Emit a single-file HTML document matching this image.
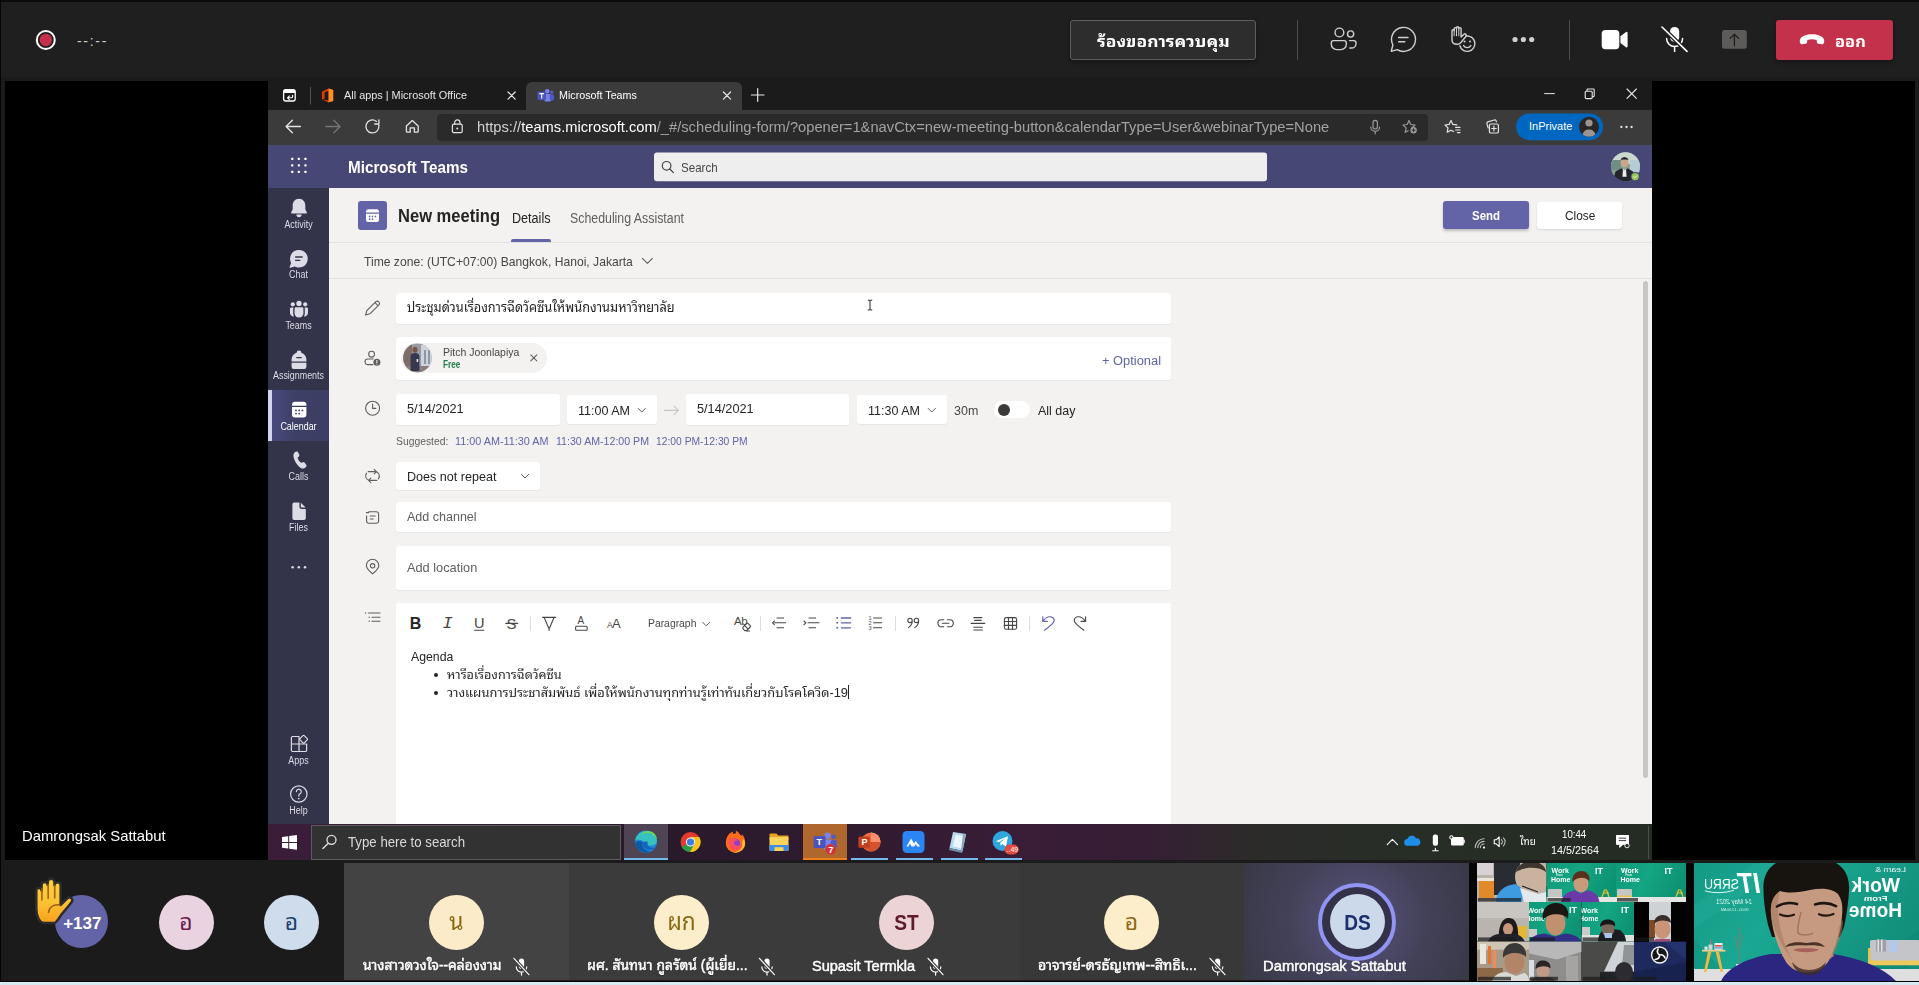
<!DOCTYPE html>
<html lang="th">
<head>
<meta charset="utf-8">
<title>Microsoft Teams meeting</title>
<style>
*{box-sizing:border-box;margin:0;padding:0}
html,body{width:1919px;height:985px;overflow:hidden;background:#1f1f1f}
body{position:relative;font-family:"Liberation Sans","Noto Sans Thai Looped","Loma","Noto Sans Thai",sans-serif;color:#fff}
.a{position:absolute}
.t{position:absolute;white-space:nowrap;line-height:1;transform-origin:0 50%}
svg{position:absolute;overflow:visible}
/* ---------- top bar ---------- */
#topline{left:0;top:0;width:1919px;height:2px;background:#0b0b0b}
#topshade{left:0;top:77px;width:1919px;height:905px;background:#1b1b1b}
#leftline{left:0;top:0;width:1px;height:982px;background:#050505;z-index:5}
#stage{left:5px;top:81px;width:1910px;height:779px;background:#000}
#strip{left:0;top:860px;width:1919px;height:121px;background:#1b1b1b}
#bottomline{left:0;top:980.700px;width:1919px;height:4.300px;background:linear-gradient(#000 0,#000 1.300px,#dbeef5 1.300px,#cfe5ee 100%)}
/* ---------- browser ---------- */
#tabbar{left:268px;top:81px;width:1384px;height:29px;background:#1c1b1c}
#tabactive{left:526px;top:82px;width:216px;height:28px;background:#3b3b3b;border-radius:6px 6px 0 0}
#toolbar{left:268px;top:110px;width:1384px;height:35px;background:#3b3b3b}
#urlbox{left:437px;top:114px;width:991px;height:27px;background:#2a2a2a;border-radius:4px}
/* ---------- teams ---------- */
#thead{left:268px;top:145px;width:1384px;height:43px;background:#464775}
#rail{left:268px;top:188px;width:61px;height:636px;background:#33344a}
#content{left:329px;top:188px;width:1323px;height:636px;background:#f3f2f1}
#taskbar{left:268px;top:824px;width:1384px;height:36px;background:#2f1d30}
.rl{font-size:10px;color:#dcdce6;left:268.200px !important;width:61px;text-align:center;transform:scaleX(.89);transform-origin:50% 50%}
.av{width:55px;height:55px;border-radius:50%}
.c{text-align:center;transform-origin:50% 50%}
.nm{font-size:14.200px;font-weight:400;color:#fff;-webkit-text-stroke:0.450px #fff;text-shadow:0 1px 1px rgba(0,0,0,.35)}
.box{position:absolute;background:#fff;border-radius:3px;box-shadow:0 1px 1px rgba(0,0,0,.05)}
</style>
</head>
<body>
<div class="a" id="topline"></div>
<div class="a" id="topshade"></div>
<div class="a" id="leftline"></div>
<div class="a" id="stage"></div>
<div class="a" id="strip"></div>
<div class="a" id="bottomline"></div>

<!-- BROWSER -->
<div class="a" id="tabbar"></div>
<div class="a" id="tabactive"></div>
<div class="a" id="toolbar"></div>
<div class="a" id="urlbox"></div>

<!-- TEAMS -->
<div class="a" id="thead"></div>
<div class="a" id="rail"></div>
<div class="a" id="content"></div>
<div class="a" id="taskbar"></div>

<!--TOPBAR-->
<!-- ======== MEETING TOP BAR ======== -->
<svg class="a" style="left:0;top:0" width="1919" height="80" viewBox="0 0 1919 80">
  <!-- record -->
  <circle cx="45.8" cy="40" r="9" fill="#1f1f1f" stroke="#fff" stroke-width="2"/>
  <circle cx="45.8" cy="40" r="6.2" fill="#c4314b"/>
  <!-- separators -->
  <rect x="1297" y="20" width="1" height="40" fill="#4b4b4b"/>
  <rect x="1569" y="20" width="1" height="40" fill="#4b4b4b"/>
  <g fill="none" stroke="#d2d0ce" stroke-width="1.4" stroke-linecap="round" stroke-linejoin="round">
    <!-- people -->
    <circle cx="1339.4" cy="32.5" r="4.4"/>
    <circle cx="1350.6" cy="34" r="3.1"/>
    <path d="M1331.3 42.8a2.2 2.2 0 0 1 2.2-2.2h10.6a2.2 2.2 0 0 1 2.2 2.2v1.4a5.4 5.4 0 0 1-5.4 5.4h-4.2a5.4 5.4 0 0 1-5.4-5.4z"/>
    <path d="M1349.6 40.6h4.2a2.2 2.2 0 0 1 2.2 2.2v0.6a4.6 4.6 0 0 1-4.6 4.6h-1.6"/>
    <!-- chat -->
    <path d="M1397.2 49.6a12 12 0 1 0-4.3-4.6l-1.7 6.3z"/>
    <path d="M1398.6 37.5h9.4M1398.6 41.7h6.2"/>
    <!-- raise hand + smile -->
    <path d="M1452 40v-9.2a1.1 1.1 0 0 1 2.2 0v-2a1.15 1.15 0 0 1 2.3 0v-0.9a1.15 1.15 0 0 1 2.3 0v0.9a1.15 1.15 0 0 1 2.3 0v8.2l2.6-2.6a1.5 1.5 0 0 1 2.2 2.1l-5.2 6.2a4 4 0 0 1-3.4 1.6c-3.3 0-5.3-1.7-5.3-4.3z" />
    <path d="M1454.2 30.8v5M1456.5 28.8v7M1458.8 28.8v7" stroke-width="1"/>
    <path d="M1466.2 36a7.7 7.7 0 1 1-6.4 9.8"/>
    <path d="M1463.6 45.6a4.2 4.2 0 0 0 7.2 0" />
  </g>
  <g fill="#d2d0ce">
    <circle cx="1464.6" cy="41.6" r="1"/><circle cx="1470" cy="41.6" r="1"/>
    <!-- more -->
    <circle cx="1515" cy="39.5" r="2.6"/><circle cx="1523.4" cy="39.5" r="2.6"/><circle cx="1531.7" cy="39.5" r="2.6"/>
  </g>
  <!-- video -->
  <rect x="1601.7" y="30" width="17.6" height="19.2" rx="3.6" fill="#fff"/>
  <path d="M1620.4 36.2l5.6-4.2a1 1 0 0 1 1.6 0.8v13.6a1 1 0 0 1-1.6 0.8l-5.6-4.2z" fill="#fff"/>
  <!-- mic off -->
  <rect x="1670" y="27" width="9.2" height="14.8" rx="4.6" fill="#fff"/>
  <path d="M1666.6 38.6a8 8 0 0 0 16 0M1674.6 46.8v4.6" fill="none" stroke="#fff" stroke-width="1.5" stroke-linecap="round"/>
  <path d="M1662 27l25 24.4" stroke="#1f1f1f" stroke-width="4.2" stroke-linecap="round"/>
  <path d="M1662 27l25 24.4" stroke="#fff" stroke-width="1.6" stroke-linecap="round"/>
  <!-- share -->
  <rect x="1722" y="30" width="24.8" height="18.8" rx="2.4" fill="#5c5b5a"/>
  <path d="M1734.4 45.8v-11.4M1730.2 38.4l4.2-4.2 4.2 4.2" fill="none" stroke="#1f1f1f" stroke-width="1.3" stroke-linecap="round" stroke-linejoin="round"/>
</svg>
<div class="t" id="tb-timer" style="left:77px;top:34px;font-size:14px;color:#cfcfcf;letter-spacing:1.700px">--:--</div>
<div class="a" id="tb-req" style="left:1070px;top:20px;width:186px;height:40px;background:#2d2d2d;border:1px solid #5f5f5f;border-radius:3px;box-shadow:0 2px 4px rgba(0,0,0,.35)"></div>
<div class="t" id="tb-reqt" style="transform:scaleX(1.161);left:1097px;top:34px;font-size:15px;font-weight:700;color:#fff;">ร้องขอการควบคุม</div>
<div class="a" id="tb-leave" style="left:1776px;top:20px;width:117px;height:40px;background:#c4314b;border-radius:3px;box-shadow:0 2px 4px rgba(0,0,0,.35)"></div>
<svg class="a" style="left:1798px;top:32px" width="28" height="16" viewBox="0 0 28 16">
  <path d="M14 2.2c-5.6 0-9.700 1.800-11.500 4.200c-1 1.300-0.800 3.200-0.300 4.700c0.300 0.900 1.100 1.400 2 1.200l3.300-0.600c0.900-0.200 1.500-0.900 1.600-1.800l0.200-1.900c1.500-0.500 3.100-0.700 4.700-0.700s3.200 0.200 4.700 0.700l0.200 1.900c0.100 0.900 0.700 1.600 1.600 1.800l3.300 0.600c0.900 0.200 1.700-0.300 2-1.200c0.500-1.500 0.700-3.400-0.300-4.700c-1.800-2.400-5.900-4.200-11.500-4.200z" fill="#fff"/>
</svg>
<div class="t" id="tb-leavet" style="transform:scaleX(1.091);left:1835px;top:34px;font-size:15px;font-weight:700;color:#fff">ออก</div>
<!--/TOPBAR-->
<!--CHROME-->
<!-- ======== BROWSER CHROME ======== -->
<svg class="a" style="left:268px;top:81px" width="1384" height="64" viewBox="268 81 1384 64">
  <!-- tab actions -->
  <rect x="283.6" y="89.6" width="11.6" height="11.4" rx="2.2" fill="none" stroke="#fff" stroke-width="1.3"/>
  <path d="M283.6 92.2a2.4 2.4 0 0 1 2.4-2.6h6.800a2.4 2.4 0 0 1 2.4 2.600v0.700h-11.600z" fill="#fff"/>
  <path d="M292.6 95.200v1.600a1 1 0 0 1-1 1h-4M289.400 96l-1.900 1.800 1.900 1.800" fill="none" stroke="#fff" stroke-width="1.1" stroke-linecap="round" stroke-linejoin="round"/>
  <rect x="310" y="87" width="1" height="17.500" fill="#555"/>
  <!-- office logo -->
  <path d="M322 91.800l6.600-3.200 4.600 1.300v11l-4.600 1.300-6.600-2.600 6.600 0.800v-9.300l-4 1v6.300l-2.600 1.200z" fill="#eb3c00"/>
  <path d="M328.600 88.600l4.600 1.300v11l-4.600 1.300z" fill="#ff8f2b"/>
  <!-- teams tab icon -->
  <circle cx="547.200" cy="91.300" r="2.300" fill="#7b83eb"/>
  <circle cx="551.800" cy="92.200" r="1.700" fill="#5059c9"/>
  <rect x="544.600" y="94" width="6.400" height="7.600" rx="1.400" fill="#7b83eb"/>
  <rect x="549.600" y="94.400" width="4.400" height="6" rx="1.400" fill="#5059c9"/>
  <rect x="537.400" y="91.400" width="8.600" height="8.600" rx="1" fill="#4b53bc"/>
  <path d="M539.400 93.600h4.600M541.700 93.600v4.800" stroke="#fff" stroke-width="1.100" fill="none"/>
  <!-- tab close X -->
  <g stroke="#e8e8e8" stroke-width="1.200" stroke-linecap="round" fill="none">
    <path d="M508 92l7.200 7.200M515.200 92l-7.200 7.200"/>
    <path d="M723.400 92l7.200 7.200M730.600 92l-7.200 7.200"/>
    <path d="M751.400 95h12.600M757.700 88.700v12.600"/>
    <!-- window controls -->
    <path d="M1544.600 93.600h9.800" stroke-width="1"/>
    <path d="M1627 89l9.400 9.400M1636.400 89l-9.400 9.400" stroke-width="1.100"/>
  </g>
  <rect x="1585.200" y="91.200" width="7" height="7.400" rx="1" fill="none" stroke="#e8e8e8" stroke-width="1.100"/>
  <path d="M1587 91v-1.200a0.800 0.800 0 0 1 0.800-0.800h5.600a0.800 0.800 0 0 1 0.800 0.800v6a0.800 0.800 0 0 1-0.800 0.800h-1.200" fill="none" stroke="#e8e8e8" stroke-width="1.100"/>
  <!-- nav icons -->
  <g stroke="#e4e4e4" stroke-width="1.300" stroke-linecap="round" stroke-linejoin="round" fill="none">
    <path d="M300.400 126.500h-14M292.400 120.200l-6.300 6.300 6.300 6.300"/>
    <path d="M325.800 126.500h14M333.800 120.200l6.300 6.300-6.300 6.300" stroke="#757575"/>
    <path d="M378.800 125.200a6.500 6.500 0 1 1-2.300-3.800M378.900 119.800v4.200h-4.200"/>
    <path d="M406.400 126l5.900-5.400 5.900 5.400v5.400a0.800 0.800 0 0 1-0.800 0.800h-3v-4.400h-4.200v4.400h-3a0.800 0.800 0 0 1-0.800-0.800z"/>
  </g>
</svg>
<svg class="a" style="left:437px;top:110px" width="1215" height="35" viewBox="437 110 1215 35">
  <g stroke="#e4e4e4" stroke-width="1.200" stroke-linecap="round" stroke-linejoin="round" fill="none">
    <!-- lock -->
    <rect x="452.400" y="124.200" width="9.800" height="8.400" rx="1.400"/>
    <path d="M454.700 124v-1.500a2.600 2.600 0 0 1 5.200 0v1.500"/>
    <!-- mic -->
    <g stroke="#9a9a9a">
    <rect x="1373" y="120.400" width="4.400" height="8.600" rx="2.200"/>
    <path d="M1370.800 127a4.400 4.400 0 0 0 8.800 0M1375.200 131.600v2.200"/>
    <!-- star plus -->
    <path d="M1409 120.600l1.800 3.900 4.200 0.500-3.100 2.900 0.500 2M1409 120.600l-1.800 3.900-4.200 0.500 3.100 2.900-0.900 4.400 3-1.600"/>
    </g>
    <!-- favorites -->
    <path d="M1451 120.600l1.800 3.800 4 0.500M1451 120.600l-1.900 3.800-4.100 0.600 3 2.900-0.800 4.300 3.800-2 2.600 1.300M1455.600 127.400h4.400M1455.600 130h4.400M1457.400 132.600h2.600"/>
    <!-- collections -->
    <rect x="1489.400" y="124" width="9" height="9" rx="1.600"/>
    <path d="M1493.900 126.200v4.600M1491.600 128.500h4.600M1496.400 121.800l-0.300-0.900a1.400 1.400 0 0 0-1.700-0.900l-6.600 1.900a1.400 1.400 0 0 0-0.900 1.700l1.300 4.400"/>
  </g>
  <circle cx="457.300" cy="128.400" r="1" fill="#e4e4e4"/>
  <circle cx="1413.600" cy="130.200" r="3.200" fill="#9a9a9a"/>
  <path d="M1411.800 130.200h3.600M1413.600 128.400v3.600" stroke="#2b2b2b" stroke-width="1"/>
  <!-- inprivate -->
  <rect x="1516" y="113.400" width="87" height="26.800" rx="13.400" fill="#0067c0"/>
  <circle cx="1589" cy="126.800" r="10" fill="#2b2624"/>
  <circle cx="1589" cy="123" r="3.600" fill="#9b9592"/>
  <path d="M1582.600 134.400a6.600 6.600 0 0 1 12.800 0a10 10 0 0 1-12.800 0z" fill="#9b9592"/>
  <g fill="#e8e8e8"><circle cx="1621.400" cy="127" r="1.150"/><circle cx="1626.500" cy="127" r="1.150"/><circle cx="1631.600" cy="127" r="1.150"/></g>
</svg>
<div class="t" id="c-tab1" style="transform:scaleX(0.99);left:344px;top:89.500px;font-size:11px;color:#e6e6e6">All apps | Microsoft Office</div>
<div class="t" id="c-tab2" style="transform:scaleX(.975);left:559px;top:89.500px;font-size:11px;color:#fff">Microsoft Teams</div>
<div class="t" id="c-url" style="transform:scaleX(1.05);left:477px;top:119.500px;font-size:14px;color:#a3a3a3"><span style="color:#d2d2d2">https://</span><span style="color:#fff">teams.microsoft.com</span>/_#/scheduling-form/?opener=1&amp;navCtx=new-meeting-button&amp;calendarType=User&amp;webinarType=None</div>
<div class="t" id="c-inp" style="left:1529px;top:121px;font-size:11px;color:#fff">InPrivate</div>
<!--/CHROME-->
<!--TEAMSHEAD-->
<!-- ======== TEAMS HEADER ======== -->
<svg class="a" style="left:268px;top:145px" width="1384" height="43" viewBox="268 145 1384 43">
  <g fill="#fff">
    <rect x="291.200" y="157.800" width="2.100" height="2.100" rx="0.500"/><rect x="297.800" y="157.800" width="2.100" height="2.100" rx="0.500"/><rect x="304.400" y="157.800" width="2.100" height="2.100" rx="0.500"/>
    <rect x="291.200" y="164.300" width="2.100" height="2.100" rx="0.500"/><rect x="297.800" y="164.300" width="2.100" height="2.100" rx="0.500"/><rect x="304.400" y="164.300" width="2.100" height="2.100" rx="0.500"/>
    <rect x="291.200" y="170.800" width="2.100" height="2.100" rx="0.500"/><rect x="297.800" y="170.800" width="2.100" height="2.100" rx="0.500"/><rect x="304.400" y="170.800" width="2.100" height="2.100" rx="0.500"/>
  </g>
  <rect x="654" y="152.600" width="613" height="28.600" rx="3" fill="#eeeeee"/>
  <circle cx="666.600" cy="165.800" r="4.300" fill="none" stroke="#484644" stroke-width="1.200"/>
  <path d="M669.800 169l3.600 3.600" stroke="#484644" stroke-width="1.300" stroke-linecap="round"/>
  <!-- avatar -->
  <circle cx="1625.500" cy="166.700" r="14.500" fill="#8aa38f"/>
  <clipPath id="avc"><circle cx="1625.500" cy="166.700" r="14.500"/></clipPath>
  <g clip-path="url(#avc)">
    <rect x="1611" y="152" width="29" height="12" fill="#c9d9cf"/>
    <rect x="1611" y="160" width="10" height="10" fill="#6f8f86"/>
    <rect x="1630" y="160" width="11" height="12" fill="#b7cbd6"/>
    <ellipse cx="1624.500" cy="162.500" rx="4" ry="4.800" fill="#c9a58c"/>
    <path d="M1620.400 160.800a4.200 4.200 0 0 1 8.200-0.600l-1.200-0.800h-5.600z" fill="#1d1d22"/>
    <path d="M1612.500 182l3-10.500 6-3.200 3 3 3-3 5.500 3.200 3 10.500z" fill="#24242c"/>
    <path d="M1623 168.800l1.500 1.600 1.500-1.600 0.600 8h-4.200z" fill="#e9e9ee"/>
  </g>
  <circle cx="1635.200" cy="176.600" r="4.600" fill="#464775"/>
  <circle cx="1635.200" cy="176.600" r="3.700" fill="#92c353"/>
  <path d="M1633.500 176.700l1.200 1.200 2.200-2.300" stroke="#fff" stroke-width="0.900" fill="none" stroke-linecap="round" stroke-linejoin="round"/>
</svg>
<div class="t" id="h-title" style="transform:scaleX(.952);left:348px;top:160px;font-size:16px;font-weight:700;color:#fff">Microsoft Teams</div>
<div class="t" id="h-search" style="transform:scaleX(.89);left:680.500px;top:160.500px;font-size:13px;color:#484644">Search</div>
<!-- ======== LEFT RAIL ======== -->
<div class="a" style="left:268px;top:390px;width:61px;height:51px;background:linear-gradient(90deg,#4a4c80 0%,#3d3f66 45%,#3d3e62 100%)"></div>
<div class="a" style="left:268px;top:390px;width:3.500px;height:51px;background:#d3d4ee"></div>
<svg class="a" style="left:268px;top:188px" width="61" height="636" viewBox="268 188 61 636">
  <g fill="#dcdce6">
    <!-- activity bell -->
    <path d="M299 198.700c-3.700 0-6.300 2.900-6.300 6.400v4.100l-1.500 3a0.900 0.900 0 0 0 0.800 1.300h14a0.900 0.900 0 0 0 0.800-1.300l-1.500-3v-4.100c0-3.500-2.600-6.400-6.300-6.400z"/>
    <path d="M296.400 214.600h5.200a2.600 2.600 0 0 1-5.200 0z"/>
    <!-- chat -->
    <path d="M298.800 249.900a8.800 8.800 0 0 0-7.700 13l-1.500 4a0.600 0.600 0 0 0 0.800 0.800l4.300-1.300a8.800 8.800 0 1 0 4.100-16.500z"/>
    <!-- teams -->
    <circle cx="299" cy="303.400" r="2.700"/><circle cx="292.800" cy="304.300" r="2.100"/><circle cx="305.200" cy="304.300" r="2.100"/>
    <path d="M294.600 308.600a1.400 1.400 0 0 1 1.400-1.400h6a1.400 1.400 0 0 1 1.400 1.400v4.600a4.400 4.400 0 0 1-8.800 0z"/>
    <path d="M290 308.600a1.200 1.200 0 0 1 1.200-1.200h2.200a2.400 2.400 0 0 0-0.200 1v5a5.600 5.600 0 0 0 0.900 3a3.700 3.700 0 0 1-4.100-3.700z"/>
    <path d="M308 308.600a1.200 1.200 0 0 0-1.200-1.200h-2.200a2.400 2.400 0 0 1 0.200 1v5a5.600 5.600 0 0 1-0.900 3a3.700 3.700 0 0 0 4.100-3.700z"/>
    <!-- assignments backpack -->
    <path d="M296.600 352.800a2.400 2.400 0 0 1 4.800 0c2.900 0.900 5 3.600 5 6.800v1.800h-14.800v-1.800c0-3.200 2.100-5.900 5-6.800z"/>
    <path d="M291.600 362.800h14.800v4a2.200 2.200 0 0 1-2.200 2.200h-10.400a2.200 2.200 0 0 1-2.200-2.200z"/>
    <!-- calendar (active, white) -->
    <path d="M292 404.800a3 3 0 0 1 3-3h8.400a3 3 0 0 1 3 3v1h-14.400z" fill="#fff"/>
    <path d="M292 407h14.400v7.600a3 3 0 0 1-3 3h-8.400a3 3 0 0 1-3-3z" fill="#fff"/>
    <!-- calls -->
    <g transform="translate(299 460.300) scale(0.880) translate(-299 -461.600)"><path d="M294.600 452.200l1.600-0.500a1.600 1.600 0 0 1 1.900 0.900l1.200 2.800a1.600 1.600 0 0 1-0.400 1.800l-1.600 1.400c0.600 2.200 2.400 4.600 4.400 5.800l2-0.700a1.600 1.600 0 0 1 1.800 0.600l1.800 2.500a1.600 1.600 0 0 1-0.200 2.100l-1.200 1.100c-1.200 1.100-2.900 1.400-4.400 0.600c-4.400-2.400-8.200-8.600-8.800-13.800c-0.200-1.900 0.600-3.800 1.900-4.600z"/></g>
    <!-- files -->
    <path d="M292.400 504.300a1.800 1.800 0 0 1 1.800-1.800h5.200v4.600a1.800 1.800 0 0 0 1.800 1.800h4.600v9.300a1.800 1.800 0 0 1-1.800 1.800h-9.800a1.800 1.800 0 0 1-1.800-1.800z"/>
    <path d="M300.800 502.800l4.800 4.800h-3.600a1.200 1.200 0 0 1-1.200-1.200z"/>
    <!-- more -->
    <circle cx="292.600" cy="567.200" r="1.250"/><circle cx="298.800" cy="567.200" r="1.250"/><circle cx="305" cy="567.200" r="1.250"/>
  </g>
  <g stroke="#33344a" stroke-width="1.300" stroke-linecap="round" fill="none">
    <path d="M295.600 257h6.600M295.600 260.400h4.200"/>
    <path d="M296.800 357.600h4.400"/>
  </g>
  <g fill="#3d3e66">
    <circle cx="296" cy="410.400" r="0.950"/><circle cx="299.200" cy="410.400" r="0.950"/><circle cx="302.400" cy="410.400" r="0.950"/>
    <circle cx="296" cy="413.600" r="0.950"/><circle cx="299.200" cy="413.600" r="0.950"/>
  </g>
  <g fill="none" stroke="#dcdce6" stroke-width="1.200" stroke-linejoin="round" stroke-linecap="round">
    <!-- apps -->
    <path d="M291.400 737.700a1.200 1.200 0 0 1 1.200-1.200h6.400v7.500h-7.600zM291.400 744h7.600v7.500h-6.400a1.200 1.200 0 0 1-1.200-1.200zM299 744h7.600v6.300a1.200 1.200 0 0 1-1.200 1.200h-6.400z"/>
    <rect x="300.600" y="736.200" width="6" height="6" rx="0.900" transform="rotate(45 303.600 739.200)"/>
    <!-- help -->
    <circle cx="298.800" cy="794" r="8.200"/>
    <path d="M296.400 791.600a2.400 2.400 0 1 1 3.600 2.100c-0.800 0.500-1.200 1-1.200 2v0.400"/>
  </g>
  <circle cx="298.800" cy="798.600" r="0.850" fill="#dcdce6"/>
</svg>
<div class="t rl" id="r-1" style="left:284px;top:219.500px">Activity</div>
<div class="t rl" id="r-2" style="left:289.300px;top:270px">Chat</div>
<div class="t rl" id="r-3" style="left:286px;top:320.500px">Teams</div>
<div class="t rl" id="r-4" style="left:273.300px;top:371px">Assignments</div>
<div class="t rl" id="r-5" style="left:281px;top:421.500px;color:#fff">Calendar</div>
<div class="t rl" id="r-6" style="left:289.500px;top:472px">Calls</div>
<div class="t rl" id="r-7" style="left:290.500px;top:522.500px">Files</div>
<div class="t rl" id="r-8" style="left:289px;top:755.500px">Apps</div>
<div class="t rl" id="r-9" style="left:290px;top:806px">Help</div>
<!--/TEAMSHEAD-->
<!--RAIL-->
<!--FORM-->
<!-- ======== NEW MEETING FORM ======== -->
<div class="a" style="left:329px;top:242px;width:1323px;height:1px;background:#e3e1df"></div>
<div class="a" style="left:329px;top:278px;width:1323px;height:1px;background:#e3e1df"></div>
<div class="a" style="left:358px;top:201px;width:29px;height:29px;background:#6264a7;border-radius:3px"></div>
<div class="a" style="left:511px;top:239px;width:40px;height:3px;background:#6264a7;border-radius:2px 2px 0 0"></div>
<div class="a" style="left:1443px;top:201px;width:86px;height:28px;background:#6264a7;border-radius:3px;box-shadow:0 2px 3px rgba(0,0,0,.22)"></div>
<div class="a" style="left:1537px;top:202px;width:85px;height:27px;background:#fff;border-radius:3px;box-shadow:0 1px 2px rgba(0,0,0,.12)"></div>
<div class="a" style="left:1643px;top:281px;width:5px;height:497px;background:#c8c6c4;border-radius:3px"></div>
<!-- field boxes -->
<div class="box" style="left:396px;top:293px;width:775px;height:31px"></div>
<div class="box" style="left:396px;top:336.500px;width:775px;height:43.500px"></div>
<div class="a" style="left:401px;top:343px;width:146px;height:29.500px;background:#f3f2f1;border-radius:15px"></div>
<div class="box" style="left:396px;top:394px;width:164px;height:31px"></div>
<div class="box" style="left:567px;top:395px;width:90px;height:28.500px"></div>
<div class="box" style="left:686px;top:394px;width:163px;height:31px"></div>
<div class="box" style="left:857px;top:395px;width:90px;height:28.500px"></div>
<div class="box" style="left:396px;top:461.500px;width:144px;height:28.500px"></div>
<div class="box" style="left:396px;top:502px;width:775px;height:30px"></div>
<div class="box" style="left:396px;top:545.500px;width:775px;height:44.500px"></div>
<div class="box" style="left:396px;top:603px;width:775px;height:221px;border-radius:3px 3px 0 0"></div>
<!-- toggle -->
<div class="a" style="left:994px;top:401px;width:36px;height:17px;background:#fff;border-radius:9px"></div>
<div class="a" style="left:997.500px;top:403.500px;width:12px;height:12px;background:#3b3a39;border-radius:50%"></div>
<!--FORMICONS-->
<svg class="a" style="left:329px;top:188px" width="1323" height="636" viewBox="329 188 1323 636">
  <!-- calendar icon in purple box -->
  <path d="M366 211.800a2.600 2.600 0 0 1 2.600-2.600h7.800a2.600 2.600 0 0 1 2.600 2.600v0.800h-13z" fill="#fff"/>
  <path d="M366 213.800h13v5.600a2.600 2.600 0 0 1-2.600 2.600h-7.800a2.600 2.600 0 0 1-2.600-2.600z" fill="#fff"/>
  <g fill="#6264a7"><circle cx="369.600" cy="216.400" r="0.850"/><circle cx="372.500" cy="216.400" r="0.850"/><circle cx="375.400" cy="216.400" r="0.850"/><circle cx="369.600" cy="219.200" r="0.850"/><circle cx="372.500" cy="219.200" r="0.850"/></g>
  <g fill="none" stroke="#605e5c" stroke-width="1.100" stroke-linecap="round" stroke-linejoin="round">
    <!-- tz chevron -->
    <path d="M642.400 258.400l5 5 5-5"/>
    <!-- pencil -->
    <path d="M365.600 315l1.200-4.300 9-9a1.900 1.900 0 0 1 2.700 0l0.400 0.400a1.900 1.900 0 0 1 0 2.700l-9 9zM375 302.600l3 3"/>
    <!-- add people -->
    <circle cx="371.600" cy="354.200" r="2.900"/>
    <path d="M373.200 364.600h-5.400a2.800 2.800 0 0 1 0-5.600h5.600"/>
    <!-- clock -->
    <circle cx="372.600" cy="408.200" r="7"/>
    <path d="M372.600 404v4.400h3.200"/>
    <!-- repeat -->
    <path d="M368.200 471.600h6.800a4.400 4.400 0 0 1 3.400 7.200M376.800 480.400h-6.800a4.400 4.400 0 0 1-3.400-7.200"/>
    <path d="M374.200 469.400l2.200 2.200-2.200 2.200M370.800 478.200l-2.200 2.200 2.200 2.200"/>
    <!-- channel -->
    <path d="M368.800 511.800h7.600a2.200 2.200 0 0 1 2.200 2.200v7a2.200 2.200 0 0 1-2.200 2.200h-7.600a2.200 2.200 0 0 1-2.200-2.200v-5"/>
    <path d="M366.400 512.600h2.400M370.200 516h5M370.200 519h3"/>
    <!-- location -->
    <path d="M372.600 573.800c-2.600-2.400-6.200-5-6.200-8.400a6.200 6.200 0 0 1 12.400 0c0 3.400-3.600 6-6.200 8.400z"/>
    <circle cx="372.600" cy="565.800" r="2.200"/>
    <!-- list -->
    <path d="M368.600 613h11.400M372 617.200h8M372 621.200h8"/>
    <!-- chip X -->
    <path d="M530.800 354.800l6 6M536.800 354.800l-6 6"/>
    <!-- dropdown chevrons -->
    <path d="M638.200 408.400l3.600 3.600 3.600-3.600M928.200 408.400l3.600 3.600 3.600-3.600M521.400 474.400l3.600 3.600 3.600-3.600M702.800 622.400l3.400 3.400 3.400-3.400" stroke-width="1"/>
  </g>
  <g fill="#605e5c"><circle cx="365.700" cy="613" r="0.700"/><circle cx="369.200" cy="617.200" r="0.700"/><circle cx="369.200" cy="621.200" r="0.700"/></g>
  <circle cx="376.900" cy="362.200" r="4.300" fill="#f3f2f1"/>
  <circle cx="376.900" cy="362.200" r="3.500" fill="#605e5c"/>
  <path d="M376.900 360.400v2.200" stroke="#fff" stroke-width="1" stroke-linecap="round"/><circle cx="376.900" cy="364" r="0.550" fill="#fff"/>
  <!-- arrow between dates -->
  <path d="M664.400 410.400h14M674 406.200l4.400 4.200-4.400 4.200" fill="none" stroke="#c8c6c4" stroke-width="1.100" stroke-linecap="round" stroke-linejoin="round"/>
  <!-- I-beam cursor -->
  <path d="M867.800 300.200h1.400q0.800 0 0.800 0.800v8.200q0 0.800-0.800 0.800h-1.400M872.200 300.200h-1.400q-0.800 0-0.800 0.800M870 309.200q0 0.800 0.800 0.800h1.400" fill="none" stroke="#222" stroke-width="1"/>
  <!-- chip avatar -->
  <clipPath id="avp"><circle cx="417.500" cy="357.900" r="14.300"/></clipPath>
  <g clip-path="url(#avp)">
    <rect x="403" y="343" width="30" height="30" fill="#9a9aa4"/>
    <rect x="403" y="343" width="9" height="30" fill="#7c6d68"/>
    <rect x="421" y="345" width="12" height="22" fill="#cfd4dc"/>
    <rect x="424" y="350" width="2" height="14" fill="#8d97a6"/><rect x="428" y="350" width="2" height="14" fill="#8d97a6"/>
    <rect x="403" y="366" width="30" height="8" fill="#8a7f80"/>
    <ellipse cx="415" cy="349.800" rx="2.500" ry="3" fill="#7a5646"/>
    <path d="M410.600 371v-14.500q0-3.500 4.400-3.500t4.400 3.500v14.500z" fill="#35384f"/>
    <rect x="416.600" y="359" width="1.600" height="3" fill="#e6e6ea"/>
  </g>
  <!-- toolbar separators -->
  <g fill="#dedcda"><rect x="530" y="616" width="1" height="15"/><rect x="760" y="616" width="1" height="15"/><rect x="895" y="616" width="1" height="15"/><rect x="1029" y="616" width="1" height="15"/></g>
  <g fill="none" stroke="#484644" stroke-width="1.100" stroke-linecap="round" stroke-linejoin="round">
    <!-- U underline, S strike -->
    <path d="M474.600 630.200h9.200M505.800 623.400h11.800"/>
    <!-- highlight -->
    <path d="M542.600 617.400h13M544 617l4.600 11h1l4.600-11M549.100 628.400v2"/>
    <!-- font colour -->
    <rect x="575.600" y="626.200" width="11.600" height="4" rx="1"/>
    <!-- clear-format eraser -->
    <path d="M743.400 626.600l3.200-3.200a1 1 0 0 1 1.400 0l2.200 2.200a1 1 0 0 1 0 1.400l-3.600 3.600h-1.800l-1.400-1.400a1.800 1.800 0 0 1 0-2.600zM744.600 625.600l3.600 3.600M746.400 631h3.200"/>
    <!-- outdent -->
    <path d="M777 618h6.600M774.600 622.800h11M777 627.800h6.600M774.400 621l-1.900 1.800 1.900 1.800"/>
    <!-- indent -->
    <path d="M809 618h6.600M808 622.800h11M809 627.800h6.600M804 621l1.900 1.800-1.900 1.800"/>
    <!-- numbered -->
    <path d="M873.600 618h8M873.600 622.800h8M873.600 627.800h8"/>
    <!-- quote -->
    <path d="M912.200 620.400a2.200 2.200 0 1 0-2.200 2.200c1 0 2-0.600 2.200-1.800c0.200 2.600-1 5-3.800 6.800M918.600 620.400a2.200 2.200 0 1 0-2.200 2.200c1 0 2-0.600 2.200-1.800c0.200 2.600-1 5-3.800 6.800"/>
    <!-- link -->
    <path d="M943.800 619.800h-2.400a3.500 3.500 0 0 0 0 7h2.400M947.400 619.800h2.400a3.500 3.500 0 0 1 0 7h-2.400M942.400 623.300h6.400"/>
    <!-- align -->
    <path d="M973.800 617.600h8M974.600 620.400h6.600M971.200 623.400h13.600M973.800 627.200h8.600M973.800 630h8.600"/>
    <!-- table -->
    <rect x="1004.400" y="617.600" width="12.200" height="11.600" rx="1.800"/>
    <path d="M1008.500 617.600v11.600M1012.500 617.600v11.600M1004.400 621.500h12.200M1004.400 625.400h12.200"/>
    <!-- redo -->
    <path d="M1085.600 616.800v4.600h-4.600M1085.400 621.200c-2-3-5-4.800-8-4.400c-2.500 0.400-3.600 2.400-3 4.600c0.600 2.200 4 4.800 9.500 8.800"/>
  </g>
  <!-- bullets active (purple) -->
  <g fill="none" stroke="#6264a7" stroke-width="1.300" stroke-linecap="round">
    <path d="M841.400 618h9.200M841.400 622.800h9.200M841.400 627.800h9.200"/>
    <path d="M1042.800 616.800v4.600h4.600M1043 621.200c2-3 5-4.800 8-4.400c2.500 0.400 3.600 2.400 3 4.600c-0.600 2.200-4 4.800-9.500 8.800" stroke-width="1.200" stroke-linejoin="round"/>
  </g>
  <g fill="#6264a7"><circle cx="837.200" cy="618" r="0.950"/><circle cx="837.200" cy="622.800" r="0.950"/><circle cx="837.200" cy="627.800" r="0.950"/></g>
</svg>
<div class="t" id="k-b" style="left:409.800px;top:615.500px;font-size:16px;font-weight:700;color:#252423">B</div>
<div class="t" id="k-i" style="left:442.500px;top:614.500px;font-size:17px;font-style:italic;font-family:'Liberation Mono',monospace;color:#484644">I</div>
<div class="t" id="k-u" style="left:474px;top:616px;font-size:14.500px;color:#484644">U</div>
<div class="t" id="k-s" style="left:506.600px;top:616px;font-size:15px;color:#484644">S</div>
<div class="t" id="k-a1" style="left:577.600px;top:616px;font-size:10px;color:#484644">A</div>
<div class="t" id="k-a2" style="left:607px;top:620.500px;font-size:8.500px;color:#484644">A</div>
<div class="t" id="k-a3" style="left:612px;top:617px;font-size:13px;color:#484644">A</div>
<div class="t" id="k-ab" style="left:734px;top:615.500px;font-size:11.500px;color:#484644;letter-spacing:-0.500px">Ab</div>
<div class="t" id="k-n" style="left:868.400px;top:615.800px;font-size:5.500px;line-height:4.900px;color:#484644;white-space:pre">1
2
3</div>
<!--/FORMICONS-->
<div class="t" id="f-new" style="transform:scaleX(0.919);left:398px;top:207px;font-size:18px;font-weight:700;color:#252423">New meeting</div>
<div class="t" id="f-det" style="transform:scaleX(0.9);left:512px;top:210.500px;font-size:14px;color:#252423">Details</div>
<div class="t" id="f-sch" style="transform:scaleX(0.882);left:570px;top:210.500px;font-size:14px;color:#605e5c">Scheduling Assistant</div>
<div class="t" id="f-send" style="transform:scaleX(0.85);left:1472px;top:208.500px;font-size:13.500px;font-weight:700;color:#fff">Send</div>
<div class="t" id="f-close" style="transform:scaleX(0.877);left:1564.800px;top:208.500px;font-size:13.500px;color:#252423">Close</div>
<div class="t" id="f-tz" style="transform:scaleX(0.933);left:364px;top:254.500px;font-size:13px;color:#484644">Time zone: (UTC+07:00) Bangkok, Hanoi, Jakarta</div>
<div class="t" id="f-title" style="transform:scaleX(0.946);left:407px;top:301px;font-size:13.500px;color:#252423">ประชุมด่วนเรื่องการฉีดวัคซีนให้พนักงานมหาวิทยาลัย</div>
<div class="t" id="f-name" style="transform:scaleX(0.953);left:443px;top:346.500px;font-size:11px;color:#484644">Pitch Joonlapiya</div>
<div class="t" id="f-free" style="transform:scaleX(0.82);left:443px;top:360px;font-size:10px;font-weight:700;color:#237b4b">Free</div>
<div class="t" id="f-opt" style="transform:scaleX(0.99);left:1102px;top:353.500px;font-size:13px;color:#6264a7">+ Optional</div>
<div class="t" id="f-d1" style="transform:scaleX(0.98);left:407.400px;top:402px;font-size:13px;color:#252423">5/14/2021</div>
<div class="t" id="f-t1" style="transform:scaleX(0.963);left:578px;top:403.500px;font-size:13px;color:#252423">11:00 AM</div>
<div class="t" id="f-d2" style="transform:scaleX(0.98);left:697.400px;top:402px;font-size:13px;color:#252423">5/14/2021</div>
<div class="t" id="f-t2" style="transform:scaleX(0.963);left:868px;top:403.500px;font-size:13px;color:#252423">11:30 AM</div>
<div class="t" id="f-30" style="transform:scaleX(0.96);left:954px;top:403.500px;font-size:13px;color:#484644">30m</div>
<div class="t" id="f-all" style="transform:scaleX(0.96);left:1038px;top:403.500px;font-size:13px;color:#252423">All day</div>
<div class="t" id="f-sug" style="transform:scaleX(0.94);left:396px;top:436px;font-size:11px;color:#605e5c">Suggested:</div>
<div class="t" id="f-s1" style="transform:scaleX(0.984);left:455px;top:436px;font-size:11px;color:#6264a7">11:00 AM-11:30 AM</div>
<div class="t" id="f-s2" style="transform:scaleX(0.965);left:556px;top:436px;font-size:11px;color:#6264a7">11:30 AM-12:00 PM</div>
<div class="t" id="f-s3" style="transform:scaleX(0.937);left:656.400px;top:436px;font-size:11px;color:#6264a7">12:00 PM-12:30 PM</div>
<div class="t" id="f-rep" style="transform:scaleX(0.968);left:407px;top:469.500px;font-size:13px;color:#252423">Does not repeat</div>
<div class="t" id="f-ch" style="transform:scaleX(0.963);left:407px;top:510px;font-size:13px;color:#605e5c">Add channel</div>
<div class="t" id="f-loc" style="transform:scaleX(0.982);left:407px;top:560.500px;font-size:13px;color:#605e5c">Add location</div>
<div class="t" id="f-para" style="transform:scaleX(0.942);left:648px;top:618px;font-size:11px;color:#484644">Paragraph</div>
<div class="t" id="f-ag" style="transform:scaleX(0.944);left:410.700px;top:650px;font-size:13px;color:#252423">Agenda</div>
<div class="t" id="f-b1" style="transform:scaleX(0.971);left:447px;top:668px;font-size:13px;color:#252423">หารือเรื่องการฉีดวัคซีน</div>
<div class="t" id="f-b2" style="transform:scaleX(0.988);left:447px;top:686px;font-size:13px;color:#252423">วางแผนการประชาสัมพันธ์ เพื่อให้พนักงานทุกท่านรู้เท่าทันเกี่ยวกับโรคโควิด-19</div>
<div class="a" style="left:433.500px;top:672.500px;width:4px;height:4px;border-radius:50%;background:#252423"></div>
<div class="a" style="left:433.500px;top:690.500px;width:4px;height:4px;border-radius:50%;background:#252423"></div>
<div class="a" style="left:848px;top:685px;width:1px;height:14px;background:#252423"></div>
<!--/FORM-->
<!--TASKBAR-->
<!-- ======== WINDOWS TASKBAR ======== -->
<div class="a" style="left:268px;top:824px;width:1384px;height:36px;background:linear-gradient(90deg,#3b1d3a 0,#3a1d39 3%,#281a2a 27%,#301b30 42%,#3a1d37 55%,#361e34 63%,#2c2b2a 71%,#272e26 82%,#252c24 100%)"></div>
<div class="a" style="left:311px;top:824.500px;width:310px;height:35px;background:#323232;border:1px solid #5c5c5c"></div>
<div class="a" style="left:624px;top:824px;width:44px;height:36px;background:#4e4453"></div>
<div class="a" style="left:803px;top:824px;width:44px;height:36px;background:#b0672e"></div>
<div class="a" style="left:803px;top:857.500px;width:44px;height:2.500px;background:#f0801a"></div>
<div class="a" style="left:624px;top:857.500px;width:44px;height:2.500px;background:#76b9ed"></div>
<div class="a" style="left:851px;top:857.500px;width:37px;height:2.500px;background:#76b9ed"></div>
<div class="a" style="left:896px;top:857.500px;width:37px;height:2.500px;background:#76b9ed"></div>
<div class="a" style="left:940.500px;top:857.500px;width:37px;height:2.500px;background:#76b9ed"></div>
<div class="a" style="left:985px;top:857.500px;width:37px;height:2.500px;background:#76b9ed"></div>
<div class="a" style="left:1648px;top:826px;width:1px;height:33px;background:#4c5049"></div>
<svg class="a" style="left:268px;top:824px" width="1384" height="36" viewBox="268 824 1384 36">
  <!-- windows logo -->
  <path d="M282 837.100l6.200-0.900v5.700h-6.200zM289.200 836.100l7.800-1.100v6.900h-7.800zM282 842.900h6.200v5.700l-6.200-0.900zM289.200 842.900h7.800v6.900l-7.800-1.100z" fill="#fff"/>
  <!-- search icon -->
  <circle cx="331.500" cy="839.800" r="4.500" fill="none" stroke="#e0e0e0" stroke-width="1.300"/>
  <path d="M328.300 843.200l-5.400 5.200" stroke="#e0e0e0" stroke-width="1.400" stroke-linecap="round"/>
  <!-- edge -->
  <circle cx="646" cy="841.600" r="11" fill="#1f86dc"/>
  <path d="M635.200 840a11 11 0 0 1 21.700 0.600c0 3.200-2.600 5-5.600 5h-5.800c0-3.800-4.200-7-10.300-5.600z" fill="#36c3c0"/>
  <path d="M649.500 831.200a8 8 0 0 1 7.200 8.600c-1-3-3.400-5.600-7-6.600c-3-0.800-6 0-8.500 1.400c2-2.600 5-3.800 8.300-3.400z" fill="#6fd35a"/>
  <path d="M635.100 842.600a11 11 0 0 0 16 8.600c-5.500 0.700-10-3.700-8.400-9c-2.500-1.800-5.500-1.300-7.600 0.400z" fill="#0c59a4"/>
  <path d="M642.600 842.400c-0.600 3.600 2 6.800 5.800 7.400c3 0.400 5.600-0.600 7.400-2.400c-2 0.800-5 0.600-6.800-1c-1.400-1.200-1.800-3-1.200-4.600c-1.800-0.600-3.600-0.400-5.200 0.600z" fill="#1565c0"/>
  <!-- chrome -->
  <circle cx="690.500" cy="842" r="10" fill="#e33b2e"/>
  <path d="M690.500 842l-8.700 5a10 10 0 0 0 8 5l5-8.600z" fill="#2a9d48"/>
  <path d="M690.500 842l4.400 1.400-5 8.600a10 10 0 0 0 9.300-15h-8.700z" fill="#f7c51e"/>
  <circle cx="690.500" cy="842" r="4.600" fill="#f4f4f4"/><circle cx="690.500" cy="842" r="3.600" fill="#3c7de0"/>
  <!-- firefox -->
  <circle cx="735.500" cy="843" r="9.600" fill="#ff8a16"/>
  <path d="M728 835.500c1.500-2.500 4-3.500 5-3.700c-0.500 1.500 0.200 2.800 1.500 3.600c2-2 1.500-4.200 1-5c3.500 1.500 5 4.500 5.300 6.500c1-0.600 1.200-2 1-3c2.500 2.500 3.400 6 3.300 9a9.600 9.600 0 0 1-19.200 0c0-2.900 0.700-5.600 2.100-7.400z" fill="#ff6b1a"/>
  <path d="M743.600 839c1.200 2 1.600 4 1.500 4a9.600 9.600 0 0 1-12 9.200c5 0 8.500-3 9-7c0.300-2.400-0.200-4.500 1.500-6.200z" fill="#ffbd2e"/>
  <circle cx="735" cy="843.800" r="5.200" fill="#8a3fd1"/>
  <path d="M729 838.500c2-1 4-0.500 5 0.500c1.500 0 3 0.600 3.600 1.600c-2 0-3.200 0.800-3.400 2.200c-0.300 1.800 1.400 3.200 3.400 3c2-0.200 3-1.800 2.700-3.600c1.800 1.700 1.400 5-0.600 6.700c-2.300 2-6.300 2-8.700-0.400c-2.400-2.400-2.800-6.500-2-10z" fill="#ff4f5e"/>
  <!-- explorer -->
  <path d="M769.500 834.400a1 1 0 0 1 1-1h6l1.600 2h9.400a1 1 0 0 1 1 1v3h-19z" fill="#e8a524"/>
  <rect x="769.500" y="837" width="19" height="14" rx="1" fill="#fbd25b"/>
  <path d="M769.500 845h19v5a1 1 0 0 1-1 1h-17a1 1 0 0 1-1-1z" fill="#3f8fe0"/>
  <rect x="774.500" y="847.200" width="9" height="3.800" fill="#fbd25b"/>
  <!-- teams -->
  <circle cx="827.400" cy="835.600" r="3.200" fill="#7b83eb"/><circle cx="833.600" cy="836.800" r="2.300" fill="#5059c9"/>
  <rect x="823.600" y="839.600" width="9" height="10.600" rx="2" fill="#7b83eb"/>
  <rect x="830.600" y="840" width="6.200" height="8.400" rx="2" fill="#5059c9"/>
  <rect x="813.600" y="836" width="12" height="12" rx="1.400" fill="#4b53bc"/>
  <circle cx="830.600" cy="849.200" r="5.400" fill="#d13438"/>
  <!-- powerpoint -->
  <circle cx="871" cy="842" r="9.600" fill="#ed6c47"/>
  <path d="M871 832.400a9.600 9.600 0 0 1 9.600 9.600h-9.600z" fill="#ff8f6b"/>
  <path d="M861.400 842h19.200a9.600 9.600 0 0 1-19.200 0z" fill="#d35230"/>
  <rect x="858.400" y="836.400" width="11.400" height="11.400" rx="1.400" fill="#c43e1c"/>
  <!-- blue app -->
  <rect x="902.500" y="831" width="22" height="22" rx="4.400" fill="#2b86f5"/>
  <path d="M906.500 846.400l4.600-7.800 3 5 1.600-2.600 4.600 5.400h-3l-1.700-2.200-1.400 2.200h-2.600l-1.600-2.800-1.600 2.800z" fill="#fff"/>
  <!-- notepad -->
  <path d="M953 832l13 2-3.500 17-13-3z" fill="#b9d9ee"/>
  <path d="M955.500 834.800l8.600 1.400-2.600 12.200-8.600-2z" fill="#e9f4fb"/>
  <path d="M949.500 848l13 3-0.500 2-13-3z" fill="#6e8fa6"/>
  <path d="M963 834l3 0.500-3.500 17-1.600-0.400z" fill="#8aa9bf"/>
  <!-- telegram -->
  <circle cx="1002.500" cy="841" r="10" fill="#2ea6de"/>
  <path d="M996 841l12-4.800-2 10.400-3.600-2.600-1.800 1.800-0.400-3 5.400-4.800-6.800 4.200z" fill="#fff"/>
  <rect x="1004.500" y="844.600" width="14" height="9.800" rx="4.900" fill="#e2493f"/>
  <!-- tray -->
  <g fill="none" stroke="#fff" stroke-width="1.100" stroke-linecap="round" stroke-linejoin="round">
    <path d="M1387.200 844.600l5.200-5.200 5.200 5.200"/>
    <path d="M1435.400 848.200v2.400M1432.600 850.800h5.600"/>
    <rect x="1451.600" y="837.600" width="11.600" height="7.400" rx="0.800" fill="#fff"/>
    <path d="M1464.200 840v2.600"/>
    <circle cx="1451.400" cy="837.400" r="1.600" fill="#272e26"/>
    <path d="M1477.800 847.600a6.200 6.200 0 0 1 6.200-6.200M1475.200 847.600a8.800 8.800 0 0 1 8.800-8.800M1480.400 847.600a3.600 3.600 0 0 1 3.600-3.600" stroke="#bdbdbd"/>
    <path d="M1494.200 839.800h2l3-2.800v9.600l-3-2.800h-2z"/>
    <path d="M1501.400 839.600a3 3 0 0 1 0 4.400M1503.400 837.800a5.600 5.600 0 0 1 0 8" stroke="#bdbdbd"/>
    <path d="M1616.600 835.600h11.800v8.600h-5.400l-3.200 3v-3h-3.200z" fill="#fff"/>
  </g>
  <path d="M1406.800 845.800a3.400 3.400 0 0 1 0.600-6.700a4.600 4.600 0 0 1 8.600-0.900a3.900 3.900 0 0 1 1.600 7.600z" fill="#1e8fe8"/>
  <rect x="1432.800" y="834.400" width="5.200" height="11.400" rx="2.200" fill="#fff"/>
  <circle cx="1484" cy="847.600" r="1.100" fill="#fff"/>
  <path d="M1618.800 838.200h7.400M1618.800 840.600h7.400" stroke="#272e26" stroke-width="0.900"/>
  <circle cx="1627" cy="845.600" r="2.200" fill="#272e26" stroke="#fff" stroke-width="0.900"/>
</svg>
<div class="t" id="w-search" style="transform:scaleX(0.913);left:348px;top:835px;font-size:14.500px;color:#dadada">Type here to search</div>
<div class="t" id="w-tT" style="left:816.600px;top:837.500px;font-size:9px;font-weight:700;color:#fff">T</div>
<div class="t" id="w-t7" style="left:828.200px;top:844.500px;font-size:9.500px;font-weight:700;color:#fff">7</div>
<div class="t" id="w-pP" style="left:861.400px;top:837.600px;font-size:9px;font-weight:700;color:#fff">P</div>
<div class="t" id="w-49" style="left:1006.500px;top:846.200px;font-size:7px;color:#fff">..49</div>
<div class="t" id="w-th" style="transform:scaleX(0.89);left:1519.500px;top:835.500px;font-size:11px;color:#fff">ไทย</div>
<div class="t" id="w-time" style="transform:scaleX(0.88);left:1562px;top:828.500px;font-size:11px;color:#fff">10:44</div>
<div class="t" id="w-date" style="transform:scaleX(0.978);left:1550.700px;top:845px;font-size:11px;color:#fff">14/5/2564</div>
<!--/TASKBAR-->
<!--STRIP-->
<!-- ======== PARTICIPANT STRIP ======== -->
<div class="t" id="s-me" style="transform:scaleX(0.99);left:21.500px;top:828px;font-size:15px;color:#fff">Damrongsak Sattabut</div>
<div class="a" style="left:344px;top:863px;width:225px;height:117px;background:#434343"></div>
<div class="a" style="left:569px;top:863px;width:225px;height:117px;background:#3b3b3b"></div>
<div class="a" style="left:794px;top:863px;width:225px;height:117px;background:#3b3b3b"></div>
<div class="a" style="left:1019px;top:863px;width:225px;height:117px;background:#383838"></div>
<div class="a" style="left:1244px;top:863px;width:225px;height:117px;background:radial-gradient(circle at 113px 58px,#5c5982 0,#504d70 22%,#434158 55%,#393846 100%)"></div>
<div class="a" style="left:1469px;top:863px;width:446px;height:118px;background:#0a0a0a"></div>
<!-- avatars -->
<div class="a av" style="left:54.500px;top:895px;width:53px;height:53px;background:#6264a7"></div>
<div class="a av" style="left:158.500px;top:894.500px;background:#ead3e0"></div>
<div class="a av" style="left:264px;top:894.500px;background:#cfdcec"></div>
<div class="a av" style="left:428.500px;top:894.500px;background:#fbebc9"></div>
<div class="a av" style="left:653.500px;top:894.500px;background:#fdeecb"></div>
<div class="a av" style="left:878.500px;top:894.500px;background:#ecd3d6"></div>
<div class="a av" style="left:1104px;top:894.500px;background:#fdeecb"></div>
<div class="a" style="left:1318px;top:882.500px;width:78px;height:78px;border-radius:50%;border:4px solid #9194f2;background:#343248"></div>
<div class="a av" style="left:1329.500px;top:894px;background:#ccd9ea"></div>
<div class="t c" id="s-137" style="left:55.800px;width:53px;top:915px;font-size:17px;font-weight:700;color:#fff">+137</div>
<div class="t c" id="s-a1" style="left:158.500px;width:55px;top:911.200px;font-size:22.800px;color:#6b1a4c">อ</div>
<div class="t c" id="s-a2" style="left:264px;width:55px;top:911.200px;font-size:22.800px;color:#1c3f6e">อ</div>
<div class="t c" id="s-a3" style="transform:scaleX(0.916);left:428.500px;width:55px;top:909px;font-size:25px;color:#8a6914">น</div>
<div class="t c" id="s-a4" style="transform:scaleX(0.905);left:653.500px;width:55px;top:909px;font-size:25px;color:#8a6914">ผก</div>
<div class="t c" id="s-a5" style="transform:scaleX(0.85);left:878.500px;width:55px;top:911.500px;font-size:22.500px;font-weight:700;color:#5e1a26">ST</div>
<div class="t c" id="s-a6" style="left:1104px;width:55px;top:911.200px;font-size:22.800px;color:#8a6914">อ</div>
<div class="t c" id="s-a7" style="transform:scaleX(0.85);left:1329.500px;width:55px;top:911.500px;font-size:22.500px;font-weight:700;color:#1b2f6c">DS</div>
<!-- names -->
<div class="t nm" id="s-n1" style="transform:scaleX(0.967);left:363px;top:958px">นางสาวดวงใจ--คล่องงาม</div>
<div class="t nm" id="s-n2" style="transform:scaleX(0.976);left:587.200px;top:958px">ผศ. สันทนา กูลรัตน์ (ผู้เยี่ย...</div>
<div class="t nm" id="s-n3" style="transform:scaleX(1.025);left:812.300px;top:959px">Supasit Termkla</div>
<div class="t nm" id="s-n4" style="transform:scaleX(0.999);left:1037.800px;top:958px">อาจารย์-ดรธัญเทพ--สิทธิเ...</div>
<div class="t nm" id="s-n5" style="transform:scaleX(1.041);left:1262.600px;top:959px">Damrongsak Sattabut</div>
<svg class="a" style="left:0;top:860px" width="1470" height="121" viewBox="0 860 1470 121">
  <defs>
    <linearGradient id="hg" x1="0" y1="0" x2="0" y2="1"><stop offset="0" stop-color="#fcd43c"/><stop offset="0.550" stop-color="#fcc132"/><stop offset="1" stop-color="#f9a01e"/></linearGradient>
    </defs>
  <!-- raised hand -->
  <g transform="translate(49 0) scale(1.060 1) translate(-49 0)">
  <path d="M37 890.500a2.500 2.500 0 0 1 5 0v-5.500a2.900 2.900 0 0 1 5.800 0v-3a3.200 3.200 0 0 1 6.400 0v3.200a2.900 2.900 0 0 1 5.800 0v19.800l6-6.400c1.600-1.800 4.800-1.200 5 1.400c0.100 1.200-0.600 2.200-1.400 3.200l-8.600 11c-2.200 3.600-5 8.800-7 8.800h-10c-3.500 0-7-6-7-14z" fill="url(#hg)" stroke="#2c2c2c" stroke-width="2.400" stroke-linejoin="round"/>
  <path d="M42.300 888.500v11.500M48.200 884.500v14M54.400 885v13" stroke="#a0601c" stroke-width="1.500" stroke-linecap="round" fill="none"/>
  <path d="M48.500 912.500c0.500-5 4.500-8.500 10.500-7.500" stroke="#a0601c" stroke-width="1.500" stroke-linecap="round" fill="none"/>
    </g>
  <g transform="translate(521.500 966.500)">
      <rect x="-2.600" y="-8" width="5.200" height="10.400" rx="2.600" fill="#fff"/>
      <path d="M-5.200 0.400a5.200 5.200 0 0 0 10.400 0M0 5.800v2.800" fill="none" stroke="#fff" stroke-width="1.200" stroke-linecap="round"/>
      <path d="M-7.600 -8.200l15 16.400" stroke="#3b3b3b" stroke-width="3.400"/>
      <path d="M-7.600 -8.200l15 16.400" stroke="#fff" stroke-width="1.200" stroke-linecap="round"/>
    </g>
  <g transform="translate(767 966.500)">
      <rect x="-2.600" y="-8" width="5.200" height="10.400" rx="2.600" fill="#fff"/>
      <path d="M-5.200 0.400a5.200 5.200 0 0 0 10.400 0M0 5.800v2.800" fill="none" stroke="#fff" stroke-width="1.200" stroke-linecap="round"/>
      <path d="M-7.600 -8.200l15 16.400" stroke="#3b3b3b" stroke-width="3.400"/>
      <path d="M-7.600 -8.200l15 16.400" stroke="#fff" stroke-width="1.200" stroke-linecap="round"/>
    </g>
  <g transform="translate(935.600 966.500)">
      <rect x="-2.600" y="-8" width="5.200" height="10.400" rx="2.600" fill="#fff"/>
      <path d="M-5.200 0.400a5.200 5.200 0 0 0 10.400 0M0 5.800v2.800" fill="none" stroke="#fff" stroke-width="1.200" stroke-linecap="round"/>
      <path d="M-7.600 -8.200l15 16.400" stroke="#3b3b3b" stroke-width="3.400"/>
      <path d="M-7.600 -8.200l15 16.400" stroke="#fff" stroke-width="1.200" stroke-linecap="round"/>
    </g>
  <g transform="translate(1217.600 966.500)">
      <rect x="-2.600" y="-8" width="5.200" height="10.400" rx="2.600" fill="#fff"/>
      <path d="M-5.200 0.400a5.200 5.200 0 0 0 10.400 0M0 5.800v2.800" fill="none" stroke="#fff" stroke-width="1.200" stroke-linecap="round"/>
      <path d="M-7.600 -8.200l15 16.400" stroke="#3b3b3b" stroke-width="3.400"/>
      <path d="M-7.600 -8.200l15 16.400" stroke="#fff" stroke-width="1.200" stroke-linecap="round"/>
    </g>
</svg>
<!--/STRIP-->
<!--VIDEO-->
<!-- ======== VIDEO TILES ======== -->
<svg class="a" style="left:1469px;top:863px;filter:blur(0.450px)" width="450" height="118" viewBox="1469 863 450 118" font-family="Liberation Sans, sans-serif">
  <defs>
    <linearGradient id="gr" x1="0" y1="0" x2="1" y2="0.300"><stop offset="0" stop-color="#0f9a78"/><stop offset="0.500" stop-color="#14a583"/><stop offset="1" stop-color="#0d9373"/></linearGradient>
    <linearGradient id="gr2" x1="0" y1="0" x2="1" y2="0.400"><stop offset="0" stop-color="#149a86"/><stop offset="0.450" stop-color="#1aa892"/><stop offset="1" stop-color="#12907c"/></linearGradient>
    <clipPath id="vA"><rect x="1477" y="863" width="69.400" height="39.100"/></clipPath>
    <clipPath id="vB"><rect x="1546.400" y="863" width="69.600" height="39.100"/></clipPath>
    <clipPath id="vD"><rect x="1477" y="902.100" width="52" height="39.500"/></clipPath>
    <clipPath id="vE"><rect x="1529" y="902.100" width="52.500" height="39.500"/></clipPath>
    <clipPath id="vF"><rect x="1581.500" y="902.100" width="52.500" height="39.500"/></clipPath>
    <clipPath id="vG"><rect x="1634" y="902.100" width="52" height="39.500"/></clipPath>
    <clipPath id="vH"><rect x="1477" y="941.600" width="52" height="39.400"/></clipPath>
    <clipPath id="vI"><rect x="1529" y="941.600" width="52.500" height="39.400"/></clipPath>
    <clipPath id="vJ"><rect x="1581.500" y="941.600" width="52.500" height="39.400"/></clipPath>
    <clipPath id="vK"><rect x="1634" y="941.600" width="52" height="39.400"/></clipPath>
    <clipPath id="vL"><rect x="1694" y="863" width="225" height="118"/></clipPath>
  </defs>
  <rect x="1469" y="863" width="450" height="118" fill="#050505"/>
  <!-- A: office, man blue shirt -->
  <g clip-path="url(#vA)">
    <rect x="1477" y="863" width="70" height="40" fill="#b9b3ac"/>
    <rect x="1477" y="863" width="16" height="12" fill="#d8d2d6"/>
    <rect x="1479" y="881" width="15" height="17" fill="#e08a2c"/>
    <rect x="1477" y="878" width="18" height="3" fill="#e9e4de"/>
    <path d="M1494 863h26v22l-14 10h-12z" fill="#2a2c33"/>
    <ellipse cx="1532" cy="877" rx="17" ry="17" fill="#c9b39f"/>
    <path d="M1516 872c2-9 12-12 20-10c6 1.500 10 6 10 10c-6-5-20-6-30 0z" fill="#3d3530"/>
    <path d="M1496 902c0-10 8-17 20-18l8 6-2 12z" fill="#3f9be0"/>
    <path d="M1520 888l18 6 8-2v10h-22z" fill="#e3e8ee"/>
    <path d="M1522 886l16 6" stroke="#22262c" stroke-width="1.200"/>
  </g>
  <!-- B: green + man purple -->
  <g clip-path="url(#vB)">
    <rect x="1546.400" y="863" width="70" height="40" fill="url(#gr)"/>
    <rect x="1546.400" y="897" width="70" height="6" fill="#e4e6e4"/>
    <rect x="1548" y="889" width="14" height="8" rx="1" fill="#c4c6c4"/>
    <ellipse cx="1581" cy="884" rx="7.500" ry="8.500" fill="#c99a7c"/>
    <path d="M1572.500 882c-1-8 5-11 9-11s9 3 8 10c-3-4-12-5-17 1z" fill="#5a2f1c"/>
    <path d="M1561 902c2-8 8-11 14-11.500l6 3 6-3c7 0.500 11 4 12.500 11.500z" fill="#6a3aa8"/>
    <path d="M1602 897l2.500-7h2l2.500 7M1603 893h6" stroke="#f2c230" stroke-width="1.200" fill="none"/>
  </g>
  <text x="1551.500" y="873" font-size="7" font-weight="700" fill="#fff">Work</text>
  <text x="1551" y="881.500" font-size="7" font-weight="700" fill="#fff">Home</text>
  <text x="1556" y="875.800" font-size="2.600" font-weight="700" fill="#e8f6f0">From</text>
  <text x="1595" y="874" font-size="9" font-weight="700" fill="#fff">IT</text>
  <!-- C: green, no person -->
  <rect x="1616" y="863" width="70" height="39.100" fill="url(#gr)"/>
  <rect x="1616" y="897" width="70" height="5.100" fill="#e4e6e4"/>
  <rect x="1617" y="889" width="15" height="8" rx="1" fill="#c4c6c4"/>
  <rect x="1617" y="895.500" width="15" height="1.600" fill="#e8c04a"/>
  <path d="M1676 897l2.500-7h2l2.500 7M1677 893h6" stroke="#f2c230" stroke-width="1.200" fill="none"/>
  <text x="1621" y="873" font-size="7" font-weight="700" fill="#fff">Work</text>
  <text x="1620.500" y="881.500" font-size="7" font-weight="700" fill="#fff">Home</text>
  <text x="1625.500" y="875.800" font-size="2.600" font-weight="700" fill="#e8f6f0">From</text>
  <text x="1664.500" y="874" font-size="9" font-weight="700" fill="#fff">IT</text>
  <!-- D: woman, beige -->
  <g clip-path="url(#vD)">
    <rect x="1477" y="902" width="52" height="40" fill="#b9b4ad"/>
    <rect x="1477" y="902" width="52" height="16" fill="#c9c6c2"/>
    <rect x="1517" y="926" width="10" height="12" fill="#e2b73a"/>
    <path d="M1499 941c-1-10 1-22 9-23s11 8 10 23z" fill="#1d1a1b"/>
    <ellipse cx="1508" cy="929" rx="5" ry="6" fill="#c7967c"/>
    <path d="M1488 942c2-7 8-8 13-8h12c6 0 10 3 12 8z" fill="#23222a"/>
  </g>
  <!-- E: green + man -->
  <g clip-path="url(#vE)">
    <rect x="1529" y="902" width="53" height="40" fill="url(#gr)"/>
    <text x="1527.500" y="912.500" font-size="7" font-weight="700" fill="#fff">Work</text>
    <text x="1525.500" y="921" font-size="7" font-weight="700" fill="#fff">Home</text>
    <text x="1569" y="913" font-size="9" font-weight="700" fill="#fff">IT</text>
    <rect x="1529" y="929" width="8" height="8" fill="#c9cbc8"/>
    <ellipse cx="1555.500" cy="923" rx="10" ry="12.500" fill="#c2906e"/>
    <path d="M1543 920c-2-12 6-17 13-17s14 4 12 16c-3-6-20-7-25 1z" fill="#1a1614"/>
    <path d="M1529 942c2-6 9-8 16-8.500l10 3 10-3c8 0.500 14 3 17 8.500z" fill="#33308a"/>
  </g>
  <!-- F: green + masked man -->
  <g clip-path="url(#vF)">
    <rect x="1581.500" y="902" width="53" height="40" fill="url(#gr)"/>
    <text x="1580.500" y="912.500" font-size="7" font-weight="700" fill="#fff">Work</text>
    <text x="1579" y="921" font-size="7" font-weight="700" fill="#fff">Home</text>
    <text x="1621" y="913" font-size="9" font-weight="700" fill="#fff">IT</text>
    <rect x="1581.500" y="935" width="53" height="7" fill="#dfe3df"/>
    <rect x="1582" y="927" width="8" height="8" fill="#c9cbc8"/>
    <path d="M1598 942c0-6 3-12 8-14l14 2c4 3 6 7 6 12z" fill="#1c1d22"/>
    <ellipse cx="1608" cy="929" rx="6.500" ry="7.500" fill="#7b675a"/>
    <path d="M1600 927c0-6 4-7.500 8-7.500s8 2 7 7c-3-3-11-3-15 0.500z" fill="#17171a"/>
    <path d="M1604 933h8v5h-7z" fill="#a9c4e6"/>
  </g>
  <!-- G: black w/ portrait strip -->
  <g clip-path="url(#vG)">
    <rect x="1634" y="902" width="52" height="40" fill="#020202"/>
    <rect x="1649" y="902" width="22" height="40" fill="#cfd2d4"/>
    <rect x="1649" y="920" width="6" height="18" fill="#7d4a2a"/>
    <ellipse cx="1662.500" cy="929" rx="8" ry="10" fill="#c99478"/>
    <path d="M1654 924c0-7 5-9 9-9s8 3 8 8c-4-3-12-4-17 1z" fill="#3a2e2b"/>
    <path d="M1652 942l4-3h14l1 3z" fill="#a24a7a"/>
  </g>
  <!-- H: room + man white shirt -->
  <g clip-path="url(#vH)">
    <rect x="1477" y="941.600" width="52" height="40" fill="#a79a86"/>
    <rect x="1477" y="941.600" width="52" height="8" fill="#cfc5b4"/>
    <rect x="1480" y="944" width="6" height="20" fill="#e9e6dc"/>
    <rect x="1488" y="946" width="3" height="18" fill="#e8742c"/>
    <rect x="1493" y="950" width="3" height="18" fill="#f08a5a"/>
    <rect x="1477" y="968" width="26" height="13" fill="#8c6a48"/>
    <ellipse cx="1514.500" cy="962" rx="10" ry="12" fill="#b48468"/>
    <path d="M1503 958c-1-11 6-15 12-15s12 5 11 14c-4-5-18-6-23 1z" fill="#3b3838"/>
    <path d="M1492 981c2-6 8-9 14-9l10 4 8-3c3 1 5 4 5 8z" fill="#d9d9d6"/>
  </g>
  <!-- I: grey room + woman -->
  <g clip-path="url(#vI)">
    <rect x="1529" y="941.600" width="53" height="40" fill="#8e8d8b"/>
    <path d="M1529 941.600h53v10l-25 8-28-6z" fill="#b8b8b8"/>
    <rect x="1566" y="956" width="12" height="25" fill="#a5a4a2"/>
    <rect x="1529" y="960" width="5" height="18" fill="#d8dde6"/>
    <ellipse cx="1543" cy="971" rx="6.500" ry="7.500" fill="#c09a86"/>
    <path d="M1535.500 969c0-7 4-8.500 7.500-8.500s8 2 7.500 8c-3-3-11-3-15 0.500z" fill="#2a2424"/>
    <path d="M1531 981c1-3 4-4 8-4h8c4 0 7 1 8 4z" fill="#5a4a44"/>
  </g>
  <!-- J: dark + window -->
  <g clip-path="url(#vJ)">
    <rect x="1581.500" y="941.600" width="53" height="40" fill="#4a4a48"/>
    <path d="M1618 941.600h16v30h-30z" fill="#cfd3d8"/>
    <path d="M1624 945h10v20h-12z" fill="#8f9496"/>
    <path d="M1600 972h34v9.600h-34z" fill="#222326"/>
    <ellipse cx="1624" cy="972" rx="9" ry="10" fill="#2c2c30"/>
  </g>
  <!-- K: navy + OBS -->
  <g clip-path="url(#vK)">
    <rect x="1634" y="941.600" width="52" height="40" fill="#1e2a5e"/>
    <path d="M1634 941.600h30l22 18v-18z" fill="#24336e"/>
    <path d="M1634 972l52-10v19.600h-52z" fill="#18224e"/>
    <circle cx="1659.600" cy="955" r="8" fill="#15161a" stroke="#f4f4f4" stroke-width="1.400"/>
    <path d="M1659.600 955c-2-1-3-3.500-1.500-6M1659.600 955c2-0.500 4.500 0.500 5.500 3M1659.600 955c0 2.200-1.500 4.200-4.500 4.500" fill="none" stroke="#f4f4f4" stroke-width="1.600" stroke-linecap="round"/>
  </g>
  <!-- name bars -->
  <g fill="#1b1b1b" opacity="0.700">
    <rect x="1478" y="898" width="43" height="3.600"/><rect x="1547.500" y="898" width="23" height="3.600"/><rect x="1617" y="898" width="21" height="3.600"/>
    <rect x="1478" y="937.400" width="38" height="3.600"/><rect x="1530" y="937.400" width="25" height="3.600"/><rect x="1582.500" y="937.400" width="22" height="3.600"/><rect x="1635" y="937.400" width="19" height="3.600"/>
    <rect x="1478" y="976.800" width="33" height="3.600"/><rect x="1530" y="976.800" width="28" height="3.600"/><rect x="1582.500" y="976.800" width="23" height="3.600"/><rect x="1635" y="976.800" width="22" height="3.600"/>
  </g>
  <!-- L: large self video -->
  <g clip-path="url(#vL)">
    <rect x="1694" y="863" width="226" height="118" fill="url(#gr2)"/>
    <path d="M1694 905l60-42h34l-94 66z" fill="#22b09a" opacity="0.400"/>
    <path d="M1850 981l70-52v30l-30 22z" fill="#0e8470" opacity="0.450"/>
    <path d="M1694 940l40 41h-40z" fill="#0e8a76" opacity="0.400"/>
    <rect x="1694" y="969" width="226" height="12" fill="#dedfde"/>
    <!-- sofa -->
    <rect x="1870" y="940" width="50" height="22" rx="2" fill="#c3c5c8"/>
    <rect x="1876" y="939.500" width="10" height="12" fill="#9aa0b4"/><rect x="1877.500" y="939.500" width="1.500" height="12" fill="#e8e2c8"/><rect x="1881" y="939.500" width="1.500" height="12" fill="#e8e2c8"/>
    <rect x="1889" y="940" width="9" height="12" fill="#b4c8ea"/>
    <rect x="1868" y="948" width="2.500" height="16" fill="#e9c24a"/>
    <rect x="1868" y="960.500" width="52" height="4.800" fill="#ecc95a"/>
    <!-- table -->
    <path d="M1702 949.800h23.400v1.800h-23.400z" fill="#e8d088"/>
    <path d="M1708 951.600l-4 20.400h2.400l5-20.400zM1719 951.600l4 20.400h-2.400l-5-20.400z" fill="#f0b840"/>
    <rect x="1714.500" y="943" width="8" height="6.800" fill="#e9edf0"/><rect x="1715" y="945" width="7" height="1.600" fill="#d8564a"/><rect x="1715" y="947.400" width="7" height="1" fill="#3f78c0"/>
    <rect x="1708.500" y="944.500" width="4" height="5.300" fill="#cfd4d6"/><path d="M1710.500 944.500v-5" stroke="#d86a8a" stroke-width="1"/>
    <rect x="1704.500" y="946.500" width="3" height="3.300" fill="#dfe6e2"/>
    <path d="M1739 964c0-10-2-24 1-37M1739 950c-3-6-4-10-3-14M1740 946c2-4 3-9 2-12" stroke="#8a7a6c" stroke-width="0.800" fill="none"/>
    <rect x="1736" y="964" width="7" height="2.600" fill="#e8eceb"/>
    <!-- person -->
    <path d="M1721 981c6-12 22-22 50-27l62 0c30 5 50 14 63 27z" fill="#2b2680"/>
    <path d="M1786 948h44l4 8-24 14-28-14z" fill="#b48a6e"/>
    <path d="M1763.500 890c-1-12 4-22 12.500-27h60c9 5 14 15 13 28c-0.500 10-2 22-5 36l-4 10h-68l-4-12c-3-14-4.500-26-4.500-35z" fill="#17130f"/>
    <path d="M1771 914c-1-12 3-19 9-23c10 3 20 1 30-1c10-2 22-2 28 4c4 6 5 12 4 22c-1 16-6 32-14 46c-5 7-12 10.500-21 10.500s-16-3.500-21-10.500c-8-14-14-32-15-48z" fill="#c59a80"/>
    <path d="M1771 914c-1-12 3-19 9-23c-2 8-3 18-1 30c2 14 7 28 14 40c-8-10-21-31-22-47z" fill="#a87e64" opacity="0.700"/>
    <path d="M1843 920c0 14-6 30-14 42c5-12 9-24 10-36z" fill="#a87e64" opacity="0.550"/>
    <path d="M1777 906.500c6-3.500 14-4 20-2.400M1815 904.500c7-2 15-1.600 21 1.600" stroke="#1f1611" stroke-width="2.600" fill="none" stroke-linecap="round"/>
    <path d="M1780 914.500c4 1.800 10 1.800 14 0.200M1819 914.200c4 1.800 10 1.800 14.500-0.200" stroke="#241811" stroke-width="2.200" stroke-linecap="round" fill="none"/>
    <path d="M1801 912c-2 8-4 17-3 21c2 2.500 12 2.500 15 0" stroke="#a07458" stroke-width="1.400" fill="none"/>
    <path d="M1785 947c3-4 10-5.500 17-4.500c3 0.500 6 0.500 9 0c6-1 11 0.500 14 4.500c-6-1.600-12-2-19-1.600c-8-0.400-15 0-21 1.600z" fill="#4a3228"/>
    <path d="M1793 949.500c6-1.800 20-1.800 26 0c-4 3.500-22 3.500-26 0z" fill="#a8605a"/>
    <path d="M1792 962c4 5 10 8 17 8s13-3 17-8c-2 9-9 13-17 13s-15-4-17-13z" fill="#3c2c26" opacity="0.800"/>
    <!-- mirrored slide text -->
    <g transform="translate(1900 0) scale(-1 1)" fill="#fff" font-weight="700">
      <text x="0" y="891.600" font-size="21" textLength="48.500" lengthAdjust="spacingAndGlyphs">Work</text>
      <text x="12.500" y="901" font-size="8" textLength="23.500" lengthAdjust="spacingAndGlyphs">From</text>
      <text x="-2" y="916.500" font-size="20.500" textLength="53" lengthAdjust="spacingAndGlyphs">Home</text>
    </g>
    <g transform="translate(1906 0) scale(-1 1)" fill="#e8f6f2">
      <text x="0" y="872" font-size="7.600" textLength="31" lengthAdjust="spacingAndGlyphs">Learn &amp;</text>
    </g>
    <g transform="translate(1760.500 0) scale(-1 1)" fill="#fff">
      <text x="0" y="893.400" font-size="29" font-weight="700" font-style="italic" textLength="22" lengthAdjust="spacingAndGlyphs">IT</text>
      <text x="21.500" y="888.500" font-size="14.500" textLength="35" lengthAdjust="spacingAndGlyphs">SRRU</text>
      <text x="8.500" y="904.400" font-size="6.600" font-style="italic" fill="#dff3ee" textLength="36" lengthAdjust="spacingAndGlyphs">14 May 2021</text>
      <text x="12" y="910.500" font-size="3.600" fill="#dff3ee">09.00 - 12.00 AM</text>
    </g>
    <path d="M1705 890.800c8 2.600 20 2.400 29-0.600" stroke="#fff" stroke-width="0.900" fill="none"/>
  </g>
</svg>
<!--/VIDEO-->
</body>
</html>
